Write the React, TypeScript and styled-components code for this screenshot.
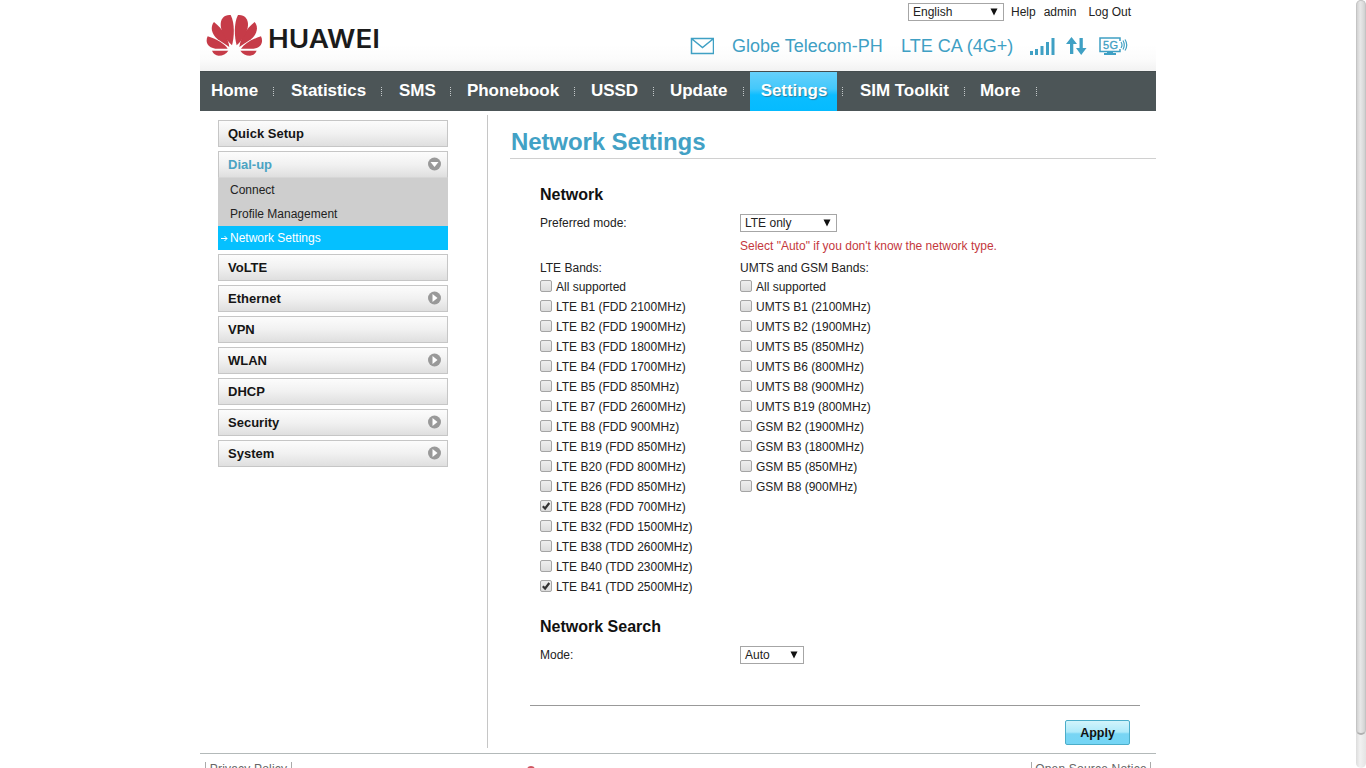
import React from 'react';
import styled, { createGlobalStyle, css } from 'styled-components';

const GlobalStyle = createGlobalStyle`
  * { box-sizing: border-box; }
  html, body { margin: 0; height: 768px; overflow: hidden; background: #fff; }
  body { font: 12px/16px "Liberation Sans", Arial, sans-serif; color: #222; }
`;

const Screen = styled.div`
  display: flex;
  justify-content: space-between;
  width: 1366px;
  height: 768px;
  overflow: hidden;
`;

const Page = styled.div`
  width: 956px;
  height: 768px;
  margin-left: 200px;
  overflow: hidden;
`;

const Header = styled.header`
  display: flex;
  justify-content: space-between;
  height: 71px;
  background: linear-gradient(#fff 45px, #fbfbfb 60px, #f2f2f2);
`;

const Brand = styled.svg`
  display: block;
  width: 190px;
  height: 62px;
`;

const HeaderRight = styled.div`
  display: flex;
  flex-direction: column;
`;

const TopLinks = styled.div`
  display: flex;
  align-items: center;
  height: 20px;
  margin-top: 2px;
  margin-left: 218px;
`;

const TopLink = styled.span<{ $gap: number }>`
  margin-left: ${(p) => p.$gap}px;
`;

const StatusBar = styled.div`
  display: flex;
  align-items: center;
  height: 28px;
  margin-top: 10px;
  width: 466px;
  color: #3fa0c4;
  font-size: 18px;
  line-height: 28px;
  white-space: nowrap;
`;

const StatusText = styled.span<{ $width: number }>`
  width: ${(p) => p.$width}px;
`;

const StatusIcon = styled.svg<{ $gap: number }>`
  flex: none;
  margin-right: ${(p) => p.$gap}px;
`;

const Nav = styled.nav`
  display: flex;
  height: 40px;
  background: #4c5557;
  border-top: 1px solid #444c4e;
`;

const NavItem = styled.div<{ $width: number; $pad: number }>`
  display: flex;
  align-items: center;
  justify-content: space-between;
  width: ${(p) => p.$width}px;
  padding-left: ${(p) => p.$pad}px;
  color: #fff;
  font-size: 17px;
  font-weight: bold;
  letter-spacing: -0.05px;
  white-space: nowrap;
  &::after {
    content: '';
    width: 1px;
    height: 9px;
    background: repeating-linear-gradient(#c3c8c9 0 1px, transparent 1px 2px);
  }
`;

const NavLabel = styled.span<{ $active?: boolean }>`
  height: 39px;
  line-height: 37px;
  ${(p) =>
    p.$active &&
    css`
      width: 87px;
      padding-left: 1px;
      text-align: center;
      background: linear-gradient(#66d0fb 0, #43c8fb 17px, #0cbdff 23px, #05bbff);
      text-shadow: 1px 1px 1px #2b7f9e;
    `}
`;

const Body = styled.div`
  display: flex;
  height: 637px;
  padding-top: 4px;
`;

const Sidebar = styled.aside`
  display: flex;
  flex-direction: column;
  gap: 4px;
  width: 288px;
  height: 633px;
  padding: 5px 39px 0 18px;
  border-right: 1px solid #c6c6c6;
`;

const MenuItem = styled.div<{ $open?: boolean }>`
  display: flex;
  align-items: center;
  justify-content: space-between;
  height: 27px;
  padding: 0 6px 0 9px;
  border: 1px solid #c6c6c6;
  ${(p) => p.$open && 'border-bottom-color: #d6d6d6;'}
  background: linear-gradient(#fcfcfc, #f1f1f1 50%, #dfdfdf);
  color: ${(p) => (p.$open ? '#4aa3c3' : '#151515')};
  font-size: 13px;
  font-weight: bold;
  line-height: 25px;
`;

const MenuArrow = styled.svg`
  display: block;
  margin-bottom: 1px;
`;

const SubItem = styled.div<{ $active?: boolean }>`
  display: flex;
  align-items: center;
  height: 24px;
  padding-left: ${(p) => (p.$active ? 3 : 12)}px;
  background: ${(p) => (p.$active ? '#05c0ff' : '#cecece')};
  color: ${(p) => (p.$active ? '#fff' : '#222')};
`;

const SubArrow = styled.svg`
  width: 7px;
  height: 7px;
  margin: 1px 2px 0 0;
`;

const Content = styled.main`
  width: 668px;
`;

const Title = styled.h1`
  margin: 0 0 0 22px;
  padding-left: 1px;
  height: 44px;
  border-bottom: 1px solid #d0d0d0;
  color: #42a1c5;
  font-size: 24px;
  letter-spacing: -0.1px;
  line-height: 53px;
`;

const Panel = styled.section`
  width: 610px;
  height: 547px;
  margin-left: 42px;
  padding: 24px 10px 0;
  border-bottom: 1px solid #999;
`;

const SectionTitle = styled.h2`
  margin: 0;
  color: #111;
  font-size: 16px;
  line-height: 24px;
`;

const FieldRow = styled.div`
  display: grid;
  grid-template-columns: 200px auto;
  align-items: center;
  height: 20px;
  margin-top: 6px;
`;

const SelectBox = styled.div<{ $width: number }>`
  display: flex;
  align-items: center;
  justify-content: space-between;
  width: ${(p) => p.$width}px;
  height: 18px;
  padding: 0 5px 0 4px;
  border: 1px solid #a6a6a6;
  background: #fff;
  line-height: 16px;
`;

const Hint = styled.p`
  margin: 5px 0 0 200px;
  height: 16px;
  color: #c4383d;
`;

const Bands = styled.div`
  display: grid;
  grid-template-columns: 200px 200px;
  height: 355px;
  margin-top: 6px;
`;

const BandsLabel = styled.div`
  height: 17px;
`;

const Option = styled.label`
  display: flex;
  align-items: center;
  gap: 4px;
  height: 20px;
  white-space: nowrap;
`;

const Check = styled.span`
  display: flex;
  width: 12px;
  height: 12px;
  margin-top: -2px;
  border: 1px solid #a5a5a5;
  border-radius: 2px;
  background: linear-gradient(#eee, #dcdcdc);
`;

const Actions = styled.div`
  display: flex;
  justify-content: flex-end;
  padding: 14px 26px 0 0;
`;

const ApplyButton = styled.button`
  width: 65px;
  height: 25px;
  padding: 0;
  border: 1px solid #4badc9;
  border-radius: 2px;
  background: linear-gradient(#d2f4fb, #aeeafa 48%, #79d5f4 56%, #74d5f5);
  color: #111;
  font: bold 12.5px "Liberation Sans", Arial, sans-serif;
`;

const Footer = styled.footer`
  display: flex;
  height: 30px;
  margin-top: 5px;
  padding: 8px 5px 0;
  border-top: 1px solid #b3b9b9;
  color: #666;
  letter-spacing: 0.2px;
`;

const FooterLink = styled.span<{ $width: number }>`
  width: ${(p) => p.$width}px;
  height: 16px;
  border: solid #aaa;
  border-width: 0 1px;
  line-height: 14px;
  text-align: center;
  white-space: nowrap;
`;

const FooterMark = styled.span`
  width: 8px;
  height: 8px;
  margin: 4px auto 0 235px;
  border-radius: 4px;
  background: #cf5560;
`;

const ScrollTrack = styled.div`
  width: 10px;
  height: 768px;
  border-radius: 5px;
  background: linear-gradient(90deg, #dcdcdc, #f1f1f1 40%, #e4e4e4);
`;

const ScrollThumb = styled.div`
  height: 735px;
  border: 1px solid #c4c4c4;
  border-bottom: 2px solid #b0b0b0;
  border-radius: 5px;
  background: linear-gradient(90deg, #d2d2d2, #e8e8e8 40%, #dcdcdc 75%, #d0d0d0);
`;

const NAV: [string, number, number][] = [
  ['Home', 74, 11],
  ['Statistics', 108, 17],
  ['SMS', 69, 17],
  ['Phonebook', 124, 16],
  ['USSD', 79, 16],
  ['Update', 90, 16],
  ['Settings', 99, 6],
  ['SIM Toolkit', 122, 17],
  ['More', 72, 15],
];

const LTE = [
  'All supported', 'LTE B1 (FDD 2100MHz)', 'LTE B2 (FDD 1900MHz)', 'LTE B3 (FDD 1800MHz)',
  'LTE B4 (FDD 1700MHz)', 'LTE B5 (FDD 850MHz)', 'LTE B7 (FDD 2600MHz)', 'LTE B8 (FDD 900MHz)',
  'LTE B19 (FDD 850MHz)', 'LTE B20 (FDD 800MHz)', 'LTE B26 (FDD 850MHz)', 'LTE B28 (FDD 700MHz)',
  'LTE B32 (FDD 1500MHz)', 'LTE B38 (TDD 2600MHz)', 'LTE B40 (TDD 2300MHz)', 'LTE B41 (TDD 2500MHz)',
];

const UMTS = [
  'All supported', 'UMTS B1 (2100MHz)', 'UMTS B2 (1900MHz)', 'UMTS B5 (850MHz)', 'UMTS B6 (800MHz)',
  'UMTS B8 (900MHz)', 'UMTS B19 (800MHz)', 'GSM B2 (1900MHz)', 'GSM B3 (1800MHz)',
  'GSM B5 (850MHz)', 'GSM B8 (900MHz)',
];

const CHECKED = ['LTE B28 (FDD 700MHz)', 'LTE B41 (TDD 2500MHz)'];

const MENU: [string, boolean][] = [
  ['VoLTE', false],
  ['Ethernet', true],
  ['VPN', false],
  ['WLAN', true],
  ['DHCP', false],
  ['Security', true],
  ['System', true],
];

function Petals() {
  return (
    <>
      <path d="M51 137H100Q90 152 71 152Q57 151 51 137Z" />
      <path d="M38 94C29 113 40 129 61 131L98 131C88 117 68 103 38 94Z" />
      <path d="M57 51C45 65 49 87 68 103L103 126C100 101 83 71 57 51Z" />
      <path d="M107 30C89 28 76 40 77 61C78 81 91 103 111 121C118 96 120 55 107 30Z" />
    </>
  );
}

function Logo() {
  return (
    <Brand viewBox="0 0 190 62">
      <g transform="translate(-5 5) scale(.3333)" fill="#c63b48">
        <Petals />
        <g transform="translate(236 0) scale(-1 1)">
          <Petals />
        </g>
      </g>
      <text x="68" y="47.5" fontFamily="Inter, sans-serif" fontWeight="600" fontSize="25" fill="#1b1b1b" textLength="112" lengthAdjust="spacingAndGlyphs">
        HUAWEI
      </text>
    </Brand>
  );
}

function CircleArrow({ down }: { down?: boolean }) {
  return (
    <MenuArrow width="14" height="14" viewBox="0 0 14 14">
      <circle cx="7.5" cy="7" r="6.5" fill="#999" />
      <path d={down ? 'M3.5 5H11.5L7.500 10Z' : 'M5.500 3V11L10.500 7Z'} fill="#fff" />
    </MenuArrow>
  );
}

function Dropdown({ width, children }: { width: number; children: string }) {
  return (
    <SelectBox $width={width}>
      {children}
      <svg width="8" height="8" viewBox="0 0 8 8">
        <path d="M.5 .5H7.5L4 7.5Z" fill="#111" />
      </svg>
    </SelectBox>
  );
}

function BandList({ label, items }: { label: string; items: string[] }) {
  return (
    <div>
      <BandsLabel>{label}</BandsLabel>
      {items.map((item) => (
        <Option key={item}>
          <Check>
            {CHECKED.includes(item) && (
              <svg width="10" height="10" viewBox="0 0 10 10">
                <path d="M1.8 5.2L4.1 7.5L8.3 2" fill="none" stroke="#333" strokeWidth="2.2" />
              </svg>
            )}
          </Check>
          {item}
        </Option>
      ))}
    </div>
  );
}

export default function App() {
  return (
    <Screen>
      <GlobalStyle />
      <Page>
        <Header>
          <Logo />
          <HeaderRight>
            <TopLinks>
              <Dropdown width={96}>English</Dropdown>
              <TopLink $gap={7}>Help</TopLink>
              <TopLink $gap={8}>admin</TopLink>
              <TopLink $gap={12}>Log Out</TopLink>
            </TopLinks>
            <StatusBar>
              <StatusIcon $gap={18} width="24" height="18" viewBox="0 0 24 18" fill="none" stroke="#3fa0c4" strokeWidth="1.5">
                <path d="M1.500 1.500H23.500V16.500H1.500ZM2 2L12.500 10.500L23 2" />
              </StatusIcon>
              <StatusText $width={169}>Globe Telecom-PH</StatusText>
              <StatusText $width={129}>LTE CA (4G+)</StatusText>
              <StatusIcon $gap={11} width="25" height="19" viewBox="0 0 25 19" fill="#3fa0c4">
                <path d="M0 14H3V18H0ZM5 12H8V18H5ZM10.500 9H13.500V18H10.500ZM16 5H19V18H16ZM21.500 1H24.500V18H21.500Z" />
              </StatusIcon>
              <StatusIcon $gap={12} width="21" height="19" viewBox="0 0 21 19" fill="#3fa0c4">
                <path d="M4 17V7H0L5.500 0L11 7H7.300V17ZM13.500 1H16.800V11H20.500L15.200 18L10 11H13.500Z" />
              </StatusIcon>
              <StatusIcon $gap={0} width="29" height="19" viewBox="0 0 29 19" fill="none" stroke="#3fa0c4" strokeWidth="1.5">
                <path d="M21 4V1H1V14.500H21V12" />
                <path d="M8 15H14V16H17V18H5V16H8Z" fill="#3fa0c4" stroke="none" />
                <path d="M22 5Q24 8 22 11M24 3.500Q26.500 8 24 12.500M26 2.500Q29.500 8 26 13.500" strokeWidth="1.2" />
                <text x="4" y="12" fill="#3fa0c4" stroke="#3fa0c4" strokeWidth=".3" fontSize="11" fontFamily="Liberation Sans, sans-serif" textLength="15">
                  5G
                </text>
              </StatusIcon>
            </StatusBar>
          </HeaderRight>
        </Header>
        <Nav>
          {NAV.map(([label, width, pad]) => (
            <NavItem key={label} $width={width} $pad={pad}>
              <NavLabel $active={label === 'Settings'}>{label}</NavLabel>
            </NavItem>
          ))}
        </Nav>
        <Body>
          <Sidebar>
            <MenuItem>Quick Setup</MenuItem>
            <div>
              <MenuItem $open>
                Dial-up
                <CircleArrow down />
              </MenuItem>
              <SubItem>Connect</SubItem>
              <SubItem>Profile Management</SubItem>
              <SubItem $active>
                <SubArrow viewBox="0 0 7 7" fill="none" stroke="#fff">
                  <path d="M0 3.500H6M3.500 1L6 3.500L3.500 6" />
                </SubArrow>
                Network Settings
              </SubItem>
            </div>
            {MENU.map(([label, arrow]) => (
              <MenuItem key={label}>
                {label}
                {arrow && <CircleArrow />}
              </MenuItem>
            ))}
          </Sidebar>
          <Content>
            <Title>Network Settings</Title>
            <Panel>
              <SectionTitle>Network</SectionTitle>
              <FieldRow>
                Preferred mode:
                <Dropdown width={97}>LTE only</Dropdown>
              </FieldRow>
              <Hint>Select "Auto" if you don't know the network type.</Hint>
              <Bands>
                <BandList label="LTE Bands:" items={LTE} />
                <BandList label="UMTS and GSM Bands:" items={UMTS} />
              </Bands>
              <SectionTitle>Network Search</SectionTitle>
              <FieldRow>
                Mode:
                <Dropdown width={64}>Auto</Dropdown>
              </FieldRow>
            </Panel>
            <Actions>
              <ApplyButton>Apply</ApplyButton>
            </Actions>
          </Content>
        </Body>
        <Footer>
          <FooterLink $width={87}>Privacy Policy</FooterLink>
          <FooterMark />
          <FooterLink $width={120}>Open Source Notice</FooterLink>
        </Footer>
      </Page>
      <ScrollTrack>
        <ScrollThumb />
      </ScrollTrack>
    </Screen>
  );
}
